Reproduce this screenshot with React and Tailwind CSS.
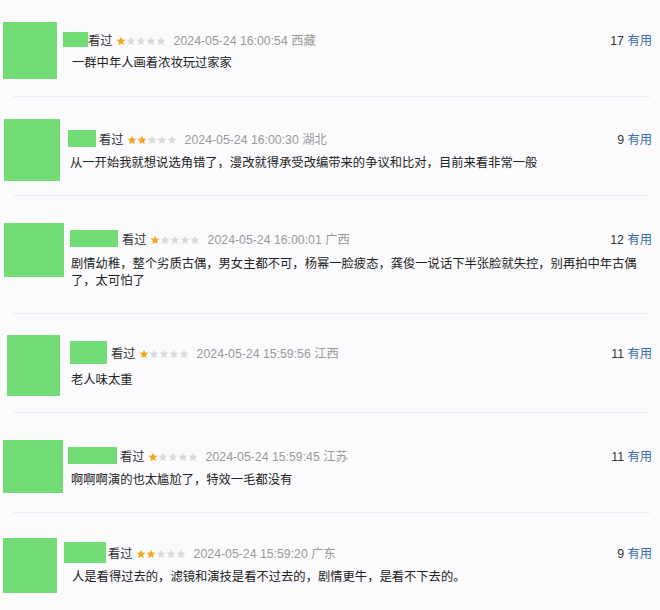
import React from 'react';

const rows = [
  {
    box: 'h-[96px]',
    avatar: 'ml-[3px] mt-[22px] w-[54px] h-[57px]',
    body: 'ml-[6px] mt-[32px]',
    name: 'w-[25px] h-[15px] mr-[0px]',
    text: 'ml-[9px] mt-[8px]',
    stars: 1,
    time: '2024-05-24 16:00:54',
    place: '西藏',
    votes: 17,
    content: '一群中年人画着浓妆玩过家家',
    line: true,
  },
  {
    box: 'h-[98px]',
    avatar: 'ml-[4px] mt-[22px] w-[56px] h-[62px]',
    body: 'ml-[8px] mt-[33px]',
    name: 'w-[28px] h-[17px] mr-[3px]',
    text: 'ml-[2px] mt-[8px]',
    stars: 2,
    time: '2024-05-24 16:00:30',
    place: '湖北',
    votes: 9,
    content: '从一开始我就想说选角错了，漫改就得承受改编带来的争议和比对，目前来看非常一般',
    line: true,
  },
  {
    box: 'h-[117px]',
    avatar: 'ml-[4px] mt-[27px] w-[60px] h-[54px]',
    body: 'ml-[6px] mt-[34px]',
    name: 'w-[48px] h-[17px] mr-[4px]',
    text: 'ml-[1px] mt-[9px] w-[572px]',
    stars: 1,
    time: '2024-05-24 16:00:01',
    place: '广西',
    votes: 12,
    content:
      '剧情幼稚，整个劣质古偶，男女主都不可，杨幂一脸疲态，龚俊一说话下半张脸就失控，别再拍中年古偶了，太可怕了',
    line: true,
  },
  {
    box: 'h-[98px]',
    avatar: 'ml-[7px] mt-[21px] w-[53px] h-[61px]',
    body: 'ml-[10px] mt-[27px]',
    name: 'w-[37px] h-[23px] mr-[4px]',
    text: 'ml-[1px] mt-[8px]',
    stars: 1,
    time: '2024-05-24 15:59:56',
    place: '江西',
    votes: 11,
    content: '老人味太重',
    line: true,
  },
  {
    box: 'h-[99px]',
    avatar: 'ml-[3px] mt-[27px] w-[60px] h-[53px]',
    body: 'ml-[5px] mt-[34px]',
    name: 'w-[49px] h-[17px] mr-[3px]',
    text: 'ml-[3px] mt-[8px]',
    stars: 1,
    time: '2024-05-24 15:59:45',
    place: '江苏',
    votes: 11,
    content: '啊啊啊演的也太尴尬了，特效一毛都没有',
    line: true,
  },
  {
    box: 'h-[97px]',
    avatar: 'ml-[3px] mt-[25px] w-[54px] h-[55px]',
    body: 'ml-[7px] mt-[29px]',
    name: 'w-[42px] h-[21px] mr-[2px]',
    text: 'ml-[8px] mt-[6px]',
    stars: 2,
    time: '2024-05-24 15:59:20',
    place: '广东',
    votes: 9,
    content: '人是看得过去的，滤镜和演技是看不过去的，剧情更牛，是看不下去的。',
    line: false,
  },
];

const Star = ({ on }) => (
  <svg width="10" height="10" viewBox="0 0 24 24">
    <path
      d="M12 1.5l3.1 7 7.4.7-5.6 5 1.7 7.4L12 17.8l-6.6 3.8 1.7-7.4-5.6-5 7.4-.7z"
      fill={on ? '#f5a623' : '#dadada'}
    />
  </svg>
);

const Row = ({ r }) => (
  <div className="flex flex-col">
    <div className={`flex items-start ${r.box}`}>
      <div className={`shrink-0 bg-[#72dd77] ${r.avatar}`} />
      <div className={`flex-1 pr-[8px] ${r.body}`}>
        <div className="flex items-center">
          <div className={`shrink-0 bg-[#72dd77] ${r.name}`} />
          <span className="pt-[3px] text-[#333] leading-none">看过</span>
          <span className="flex ml-[3px] pt-[3px]">
            {[0, 1, 2, 3, 4].map(i => (
              <Star key={i} on={i < r.stars} />
            ))}
          </span>
          <span className="ml-[8px] pt-[3px] text-[#9a9a9a] leading-none">
            {r.time} {r.place}
          </span>
          <span className="ml-auto pt-[3px] leading-none text-[#333]">
            {r.votes} <span className="text-[#3a6ea8]">有用</span>
          </span>
        </div>
        <p className={`text-[#222] leading-[17px] ${r.text}`}>{r.content}</p>
      </div>
    </div>
    {r.line && <div className="ml-[13px] w-[637px] h-px bg-[#ebecef]" />}
  </div>
);

export default function App() {
  return (
    <div className="w-[660px] h-[610px] overflow-hidden bg-[#fbfbfd] text-[12.3px] font-['Liberation_Sans','Noto_Sans_CJK_SC',sans-serif]">
      {rows.map((r, i) => (
        <Row key={i} r={r} />
      ))}
    </div>
  );
}
